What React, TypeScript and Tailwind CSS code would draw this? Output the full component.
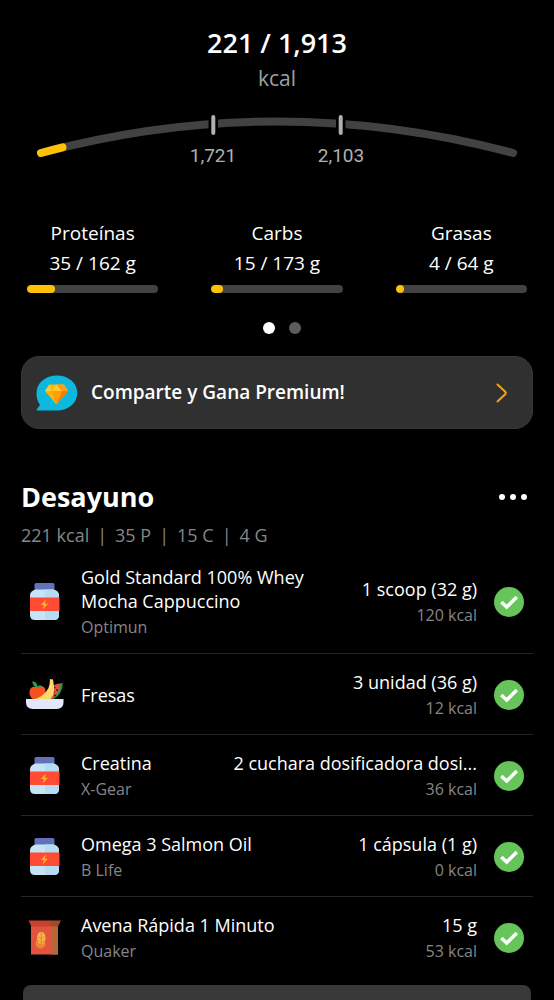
import { useState } from 'react';
import clsx from 'clsx';

type IconName = 'jar' | 'fruit' | 'box';

interface Food {
  name: string;
  brand?: string;
  amount: string;
  kcal: number;
  icon: IconName;
}

const macros = [
  { label: 'Proteínas', value: 35, goal: 162 },
  { label: 'Carbs', value: 15, goal: 173 },
  { label: 'Grasas', value: 4, goal: 64 },
];

const summary = ['221 kcal', '35 P', '15 C', '4 G'];

const foods: Food[] = [
  { name: 'Gold Standard 100% Whey Mocha Cappuccino', brand: 'Optimun', amount: '1 scoop (32 g)', kcal: 120, icon: 'jar' },
  { name: 'Fresas', amount: '3 unidad (36 g)', kcal: 12, icon: 'fruit' },
  { name: 'Creatina', brand: 'X-Gear', amount: '2 cuchara dosificadora dosi...', kcal: 36, icon: 'jar' },
  { name: 'Omega 3 Salmon Oil', brand: 'B Life', amount: '1 cápsula (1 g)', kcal: 0, icon: 'jar' },
  { name: 'Avena Rápida 1 Minuto', brand: 'Quaker', amount: '15 g', kcal: 53, icon: 'box' },
];

function JarIcon() {
  return (
    <svg viewBox="0 0 48 48" className="size-12 shrink-0" aria-hidden="true">
      <path d="M13.5 6.5q0-1.5 1.5-1.5H32q1.5 0 1.5 1.5V12h-20z" fill="#6272b8" />
      <path d="M14.5 11.5h18q5.500 1.5 5.500 6V37q0 5-5 5H14q-5 0-5-5V17.5q0-4.5 5.500-6z" fill="#c6e4f6" />
      <path d="M24 11.5h8.5q5.500 1.5 5.500 6V37q0 5-5 5h-9z" fill="#b5dcf2" />
      <path d="M9 19.500h29.500v13.500H9z" fill="#ff4b33" />
      <path d="M24.8 21.5l-4.8 5.5h2.8l-1 4.5 5-5.8h-2.900z" fill="#ffb62e" />
    </svg>
  );
}

function FruitIcon() {
  return (
    <svg viewBox="0 -1 48 48" className="size-12 shrink-0" aria-hidden="true">
      <path d="M32 13.5q4-2.5 9.800-2.5 0 11-9.800 16.500h-6z" fill="#23964f" />
      <path d="M31.5 14q4-2 8-2.200-.5 9-8.500 15h-6z" fill="#ef4a3c" />
      <circle cx="33.5" cy="15.5" r="1" fill="#33201d" />
      <circle cx="36" cy="18" r="1" fill="#33201d" />
      <circle cx="32.8" cy="20" r="1" fill="#33201d" />
      <circle cx="34" cy="23.5" r="1" fill="#33201d" />
      <path d="M15.5 15q3-2 6-.8 3.500 1.500 3 6.300-.5 5-4.500 7H12q-4-3.500-3.500-8 .8-6 7-4.500z" fill="#f4511e" />
      <path d="M16.5 15.500q-4.500-.5-5.300-6.300 5.300.3 5.300 6.300z" fill="#2e9e4f" />
      <path d="M15.5 15.5q2.500-1.500 5-1" stroke="#2e9e4f" strokeWidth="1.5" fill="none" />
      <path d="M29 7l3 .5q.8 5 1.200 9 .2 7-5 11.500H11q12-3 16.500-12 1.500-4 1.500-9z" fill="#ffd76a" />
      <path d="M5 27h37.500v3.500q0 6.500-7 6.500H12q-7 0-7-6.500z" fill="#e3e7f9" />
    </svg>
  );
}

function BoxIcon() {
  return (
    <svg viewBox="0 0 48 48" className="size-12 shrink-0" aria-hidden="true">
      <path d="M10 11h27v29.5H10z" fill="#e2543f" />
      <path d="M30.5 11H37v29.5h-6.500z" fill="#b5673a" />
      <path d="M7.5 6.5H29l2 6H10.500z" fill="#c8412f" />
      <path d="M28 6.5h12l-3 6h-6.500z" fill="#9d4c2d" />
      <circle cx="19.5" cy="29.5" r="5" fill="#e8892f" />
      <ellipse cx="20.3" cy="24" rx="4.2" ry="6.3" fill="#f9b64a" />
      <path d="M20.3 18v15M17 22.500l3.300 2.500 3.300-2.500M17 26.500l3.300 2.500 3.300-2.500" stroke="#e8892f" strokeWidth="1" fill="none" />
    </svg>
  );
}

const icons = { jar: JarIcon, fruit: FruitIcon, box: BoxIcon };

function CalorieGauge() {
  return (
    <svg viewBox="0 0 554 60" className="mt-[13px] w-full" role="img" aria-label="221 / 1,913 kcal">
      <path d="M41 45Q277-18 513 45" fill="none" stroke="#424242" strokeWidth="8" strokeLinecap="round" />
      <path d="M41 45Q51.5 42 62.5 39.3" fill="none" stroke="#ffc107" strokeWidth="8" strokeLinecap="round" />
      {/* range marks, cut out of the track */}
      <path d="M208.5 8h9.500v20h-9.500zM336 8h9.500v20H336z" fill="#000" />
      <path d="M213.3 9v16M340.7 9v16" stroke="#b0b0b0" strokeWidth="4" strokeLinecap="round" />
      <g fill="#b0b0b0" fontSize="19" textAnchor="middle" className="font-['Roboto',sans-serif]">
        <text x="213" y="54">1,721</text>
        <text x="341" y="54">2,103</text>
      </g>
    </svg>
  );
}

function Macro({ label, value, goal }: { label: string; value: number; goal: number }) {
  const percent = (value / goal) * 100;

  return (
    <div className="text-center text-[19px] leading-[30px]">
      <div>{label}</div>
      <div>{value} / {goal} g</div>
      <div
        role="progressbar"
        aria-label={label}
        aria-valuenow={value}
        aria-valuemax={goal}
        className="mt-[7px] h-2 overflow-hidden rounded-full bg-[#424242]"
      >
        <div className="h-full min-w-2 rounded-full bg-[#ffc107]" style={{ width: `${percent}%` }} />
      </div>
    </div>
  );
}

function PremiumBanner() {
  return (
    <a
      href="#premium"
      className="mx-[21px] mt-[22px] flex h-[73px] items-center rounded-[18px] border border-[#383838] bg-[#303030] pr-6 pl-3.5"
    >
      <svg viewBox="0 0 42 36" className="h-9 w-[42px] shrink-0" aria-hidden="true">
        <path d="M21 .5c11.500 0 20.300 7.500 20.300 17.500S32.500 35.500 21 35.500H1.500q-1.500 0-.6-1.200L4 30C1.500 26.500.5 22.500.5 18 .5 8 9.500.5 21 .5z" fill="#0db8de" />
        <path d="M13.5 9.500h14.500l4 6.500-11.500 13.500L9 16z" fill="#fdb515" />
        <path d="M13.5 9.500L9 16h6.500zM20.700 9.500L15.500 16h10.500z" fill="#ffca2b" />
        <path d="M28 9.500l-7.300 0 5.300 6.500h6z" fill="#f99d1c" />
        <path d="M15.5 16h10.500l-5.500 13.500z" fill="#ffa000" />
        <path d="M26 16h6L20.500 29.500z" fill="#f57c00" />
      </svg>
      <span className="ml-[13px] flex-1 text-[19px] font-semibold">Comparte y Gana Premium!</span>
      <svg viewBox="0 0 12 20" className="h-5 w-3" fill="none" stroke="#f5a315" strokeWidth="2" strokeLinecap="round" strokeLinejoin="round" aria-hidden="true">
        <path d="M1.5 1.500L9 8.500q1.500 1.500 0 3L1.500 18.500" />
      </svg>
    </a>
  );
}

function FoodRow({ food, last }: { food: Food; last: boolean }) {
  const [done, setDone] = useState(true);
  const Icon = icons[food.icon];

  return (
    <li className={clsx('flex items-center pt-4 pb-3.5', !last && 'border-b border-[#262626]')}>
      <Icon />
      <div className="ml-3 flex min-h-[50px] min-w-0 flex-1 flex-col justify-center">
        <div className="max-w-60 text-[18px] leading-6">{food.name}</div>
        {food.brand && <div className="mt-0.5 text-[16px] leading-6 text-[#868686]">{food.brand}</div>}
      </div>
      <div className="ml-3 shrink-0 text-right">
        <div className="text-[18px] leading-6">{food.amount}</div>
        <div className="mt-0.5 text-[16px] leading-6 text-[#868686]">{food.kcal} kcal</div>
      </div>
      <label className="mr-2 ml-4 grid size-8 shrink-0">
        <input
          type="checkbox"
          aria-label={food.name}
          checked={done}
          onChange={() => setDone(!done)}
          className="col-start-1 row-start-1 m-px appearance-none rounded-full bg-neutral-700 checked:bg-[#66c45a]"
        />
        {done && (
          <svg viewBox="0 0 32 32" className="pointer-events-none col-start-1 row-start-1" aria-hidden="true">
            <path d="M8.3 16l5.400 5L23.800 11" fill="none" stroke="#fff" strokeWidth="3.5" />
          </svg>
        )}
      </label>
    </li>
  );
}

export default function App() {
  return (
    <main className="flex min-h-screen flex-col bg-black font-['Open_Sans',sans-serif] text-white">
      <header className="pt-[25px] text-center">
        <h1 className="text-[27px] leading-9 font-semibold">221 / 1,913</h1>
        <p className="text-[21px] leading-[34px] text-[#a0a0a0]">kcal</p>
        <CalorieGauge />
      </header>

      <section className="mt-[50px] grid grid-cols-3 gap-[53px] px-[27px]">
        {macros.map((macro) => (
          <Macro key={macro.label} {...macro} />
        ))}
      </section>

      <div className="mt-[29px] flex justify-center gap-3.5 pl-2.5">
        <button aria-label="Macros" className="size-3 rounded-full bg-white" />
        <button aria-label="Micros" className="size-3 rounded-full bg-[#5c5c5c]" />
      </div>

      <PremiumBanner />

      <section className="mt-12 px-[21px]">
        <div className="flex items-center justify-between">
          <h2 className="text-[27px] leading-10 font-bold">Desayuno</h2>
          <button aria-label="Más opciones" className="flex gap-[5px] py-2 pr-1.5">
            <span className="size-1.5 rounded-full bg-white" />
            <span className="size-1.5 rounded-full bg-white" />
            <span className="size-1.5 rounded-full bg-white" />
          </button>
        </div>
        <div className="mt-1 flex gap-2 text-[18px] leading-7 text-[#868686]">
          {summary.map((item, i) => (
            <span key={item} className="flex gap-2">
              {i > 0 && <span>|</span>}
              {item}
            </span>
          ))}
        </div>

        <ul>
          {foods.map((food, i) => (
            <FoodRow key={food.name} food={food} last={i === foods.length - 1} />
          ))}
        </ul>
      </section>

      <div className="mx-[23px] mt-2 min-h-3.5 flex-1 rounded-t-lg bg-[#383838]" />
    </main>
  );
}
